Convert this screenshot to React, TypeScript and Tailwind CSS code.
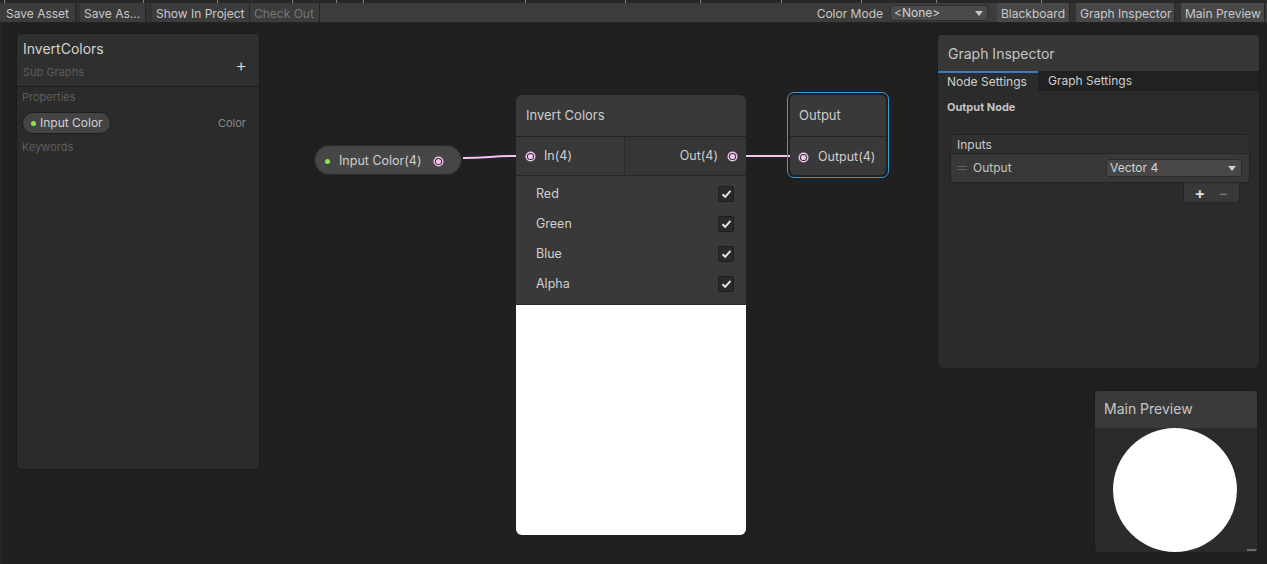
import React from "react";

const PINK = "#efc4ef";

const Port: React.FC = () => (
  <svg width="11" height="11" viewBox="0 0 11 11" className="shrink-0">
    <circle cx="5.5" cy="5.5" r="5" fill={PINK} />
    <circle cx="5.5" cy="5.5" r="3.6" fill="#2e2e2e" />
    <circle cx="5.5" cy="5.5" r="2.6" fill={PINK} />
  </svg>
);

const Check: React.FC = () => (
  <div className="w-[16px] h-[16px] rounded-[2px] bg-[#2a2a2a] border border-[#1e1e1e] flex items-center justify-center">
    <svg width="11" height="10" viewBox="0 0 11 10">
      <path d="M1.5 5.2 L4.2 7.8 L9.5 1.8" stroke="#e4e4e4" strokeWidth="2" fill="none" />
    </svg>
  </div>
);

const ToolButton: React.FC<{ label: string; w: string; dim?: boolean; on?: boolean }> = ({ label, w, dim, on }) => (
  <div
    className={`${w} h-full flex items-center pl-[4px] pt-[2px] text-[12px] border-r border-[#262626] ${
      dim ? "text-[#777]" : "text-[#c8c8c8]"
    } ${on ? "bg-[#484848]" : "bg-[#3c3c3c]"}`}
  >
    {label}
  </div>
);

const Tick: React.FC<{ ml: string }> = ({ ml }) => <div className={`${ml} w-px h-[3px] bg-[#8a8a8a]`} />;

const Toolbar: React.FC = () => (
  <div className="h-[23px] flex flex-col">
    <div className="h-[3px] shrink-0 bg-[#282828] flex items-start overflow-hidden">
      <Tick ml="ml-[4px]" />
      <Tick ml="ml-[138px]" />
      <Tick ml="ml-[73px]" />
      <Tick ml="ml-[74px]" />
      <Tick ml="ml-[43px]" />
      <Tick ml="ml-[26px]" />
      <Tick ml="ml-[161px]" />
      <Tick ml="ml-[99px]" />
      <Tick ml="ml-[74px]" />
      <Tick ml="ml-[80px]" />
      <Tick ml="ml-[79px]" />
      <Tick ml="ml-[74px]" />
      <Tick ml="ml-[104px]" />
    </div>
    <div className="h-[20px] bg-[#3c3c3c] flex items-stretch border-b border-[#232323]">
      <div className="flex ml-[2px] h-full">
        <ToolButton label="Save Asset" w="w-[74px]" />
        <div className="w-[4px] bg-[#333]" />
        <ToolButton label="Save As..." w="w-[66px]" />
        <div className="w-[6px] bg-[#333]" />
        <ToolButton label="Show In Project" w="w-[98px]" />
        <ToolButton label="Check Out" w="w-[70px]" dim />
      </div>
      <div className="flex-1" />
      <div className="flex items-center h-full">
        <span className="text-[12px] text-[#c8c8c8] mr-[7px] pt-[2px]">Color Mode</span>
        <div className="w-[98px] h-[16px] mt-[1px] rounded-[3px] bg-[#4a4a4a] border border-[#2f2f2f] flex items-center justify-between pl-[3px] pr-[4px] text-[12px] text-[#d0d0d0]">
          <span>&lt;None&gt;</span>
          <svg width="8" height="5" viewBox="0 0 8 5">
            <path d="M0 0 H8 L4 5 Z" fill="#c8c8c8" />
          </svg>
        </div>
        <div className="w-[9px]" />
        <div className="flex h-full">
          <ToolButton label="Blackboard" w="w-[73px]" on />
          <div className="w-[6px] bg-[#333]" />
          <ToolButton label="Graph Inspector" w="w-[99px]" on />
          <div className="w-[6px] bg-[#333]" />
          <ToolButton label="Main Preview" w="w-[84px]" on />
        </div>
        <div className="w-[2px]" />
      </div>
    </div>
  </div>
);

const Blackboard: React.FC = () => (
  <div className="ml-[14px] mt-[10px] w-[244px] h-[437px] rounded-[5px] bg-[#2b2b2b] border border-[#1b1b1b] flex flex-col overflow-hidden">
    <div className="h-[53px] bg-[#2f2f2f] border-b border-[#1e1e1e] px-[6px] pt-[6px] relative">
      <div className="text-[14px] text-[#d2d2d2] leading-[18px]">InvertColors</div>
      <div className="text-[11px] text-[#5c5c5c] mt-[7px] leading-[14px]">Sub Graphs</div>
      <div className="absolute right-[12px] top-[23px] text-[#e0e0e0] text-[18px] leading-[18px] font-light">+</div>
    </div>
    <div className="px-[5px] pt-[3px]">
      <div className="text-[11px] text-[#5e5e5e] leading-[14px]">Properties</div>
      <div className="flex items-center justify-between mt-[8px] pr-[8px]">
        <div className="h-[22px] w-[89px] rounded-full bg-[#444] border border-[#1d1d1d] flex items-center pl-[8px] gap-[4px]">
          <span className="w-[5px] h-[5px] rounded-full bg-[#8be54e]" />
          <span className="text-[12px] text-[#d2d2d2]">Input Color</span>
        </div>
        <span className="text-[11px] text-[#8a8a8a]">Color</span>
      </div>
      <div className="text-[11px] text-[#5e5e5e] leading-[14px] mt-[6px]">Keywords</div>
    </div>
  </div>
);

const Inspector: React.FC = () => (
  <div className="w-[323px] h-[335px] rounded-[5px] bg-[#2b2b2b] border border-[#1b1b1b] flex flex-col overflow-hidden">
    <div className="h-[36px] bg-[#373737] flex items-center pl-[10px] text-[14px] text-[#c6c6c6]">Graph Inspector</div>
    <div className="h-[20px] bg-[#212121] flex text-[12px] text-[#cfcfcf]">
      <div className="w-[100px] bg-[#2b2b2b] border-t-2 border-[#3a7ac0] flex items-center pl-[9px]">Node Settings</div>
      <div className="flex items-center pl-[10px]">Graph Settings</div>
    </div>
    <div className="px-[9px] pt-[9px]">
      <div className="text-[11px] font-bold text-[#c4c4c4] leading-[14px]">Output Node</div>
      <div className="mt-[20px] ml-[3px] w-[300px]">
        <div className="h-[20px] bg-[#303030] border border-[#232323] rounded-t-[3px] flex items-center pl-[6px] pt-[1px] text-[12px] text-[#c8c8c8]">Inputs</div>
        <div className="h-[29px] bg-[#383838] border border-t-0 border-[#232323] rounded-b-[3px] flex items-center pl-[6px] pr-[7px]">
          <div className="flex flex-col gap-[2px] w-[10px]">
            <div className="h-px bg-[#5c5c5c]" />
            <div className="h-px bg-[#5c5c5c]" />
          </div>
          <span className="ml-[6px] text-[12px] text-[#c4c4c4]">Output</span>
          <div className="flex-1" />
          <div className="w-[136px] h-[18px] rounded-[3px] bg-[#474747] border border-[#2a2a2a] flex items-center justify-between pl-[3px] pr-[5px] text-[12px] text-[#d4d4d4]">
            <span>Vector 4</span>
            <svg width="8" height="5" viewBox="0 0 8 5">
              <path d="M0 0 H8 L4 5 Z" fill="#cfcfcf" />
            </svg>
          </div>
        </div>
        <div className="flex justify-end pr-[10px]">
          <div className="w-[57px] h-[20px] bg-[#383838] border border-t-0 border-[#232323] rounded-b-[3px] flex items-center justify-around px-[4px]">
            <span className="text-[16px] leading-[16px] text-[#e2e2e2] font-semibold">+</span>
            <span className="text-[16px] leading-[16px] text-[#7a7a7a]">−</span>
          </div>
        </div>
      </div>
    </div>
  </div>
);

const MainPreview: React.FC = () => (
  <div className="mt-[21px] mr-[2px] w-[164px] h-[163px] rounded-[5px] bg-[#2b2b2b] border border-[#1b1b1b] flex flex-col overflow-hidden">
    <div className="h-[37px] shrink-0 bg-[#3a3a3a] flex items-center pl-[9px] pb-[3px] text-[14px] text-[#c6c6c6]">Main Preview</div>
    <div className="flex-1 flex justify-center relative">
      <div className="w-[124px] h-[124px] rounded-full bg-white ml-[-2px]" />
      <div className="absolute right-0 bottom-[1px] w-[10px] h-[2px] bg-[#6a6a6a]" />
    </div>
  </div>
);

const App: React.FC = () => {
  return (
    <div
      className="w-[1267px] h-[564px] bg-[#202020] overflow-hidden flex flex-col"
      style={{ fontFamily: "Inter, 'Noto Sans', sans-serif" }}
    >
      <Toolbar />
      <div className="relative flex-1 flex justify-between border-l-2 border-[#252525]">
        <Blackboard />
        <div className="flex flex-col items-end mr-[7px] mt-[11px]">
          <Inspector />
          <MainPreview />
        </div>

        {/* edges */}
        <svg className="absolute left-0 top-0 pointer-events-none" width="1265" height="541">
          <path d="M461 135 C 488 135, 488 133, 514 133" stroke={PINK} strokeWidth="2" fill="none" />
          <path d="M514 133 H 526" stroke="#6a5a6a" strokeWidth="2" />
          <path d="M736 133 H 788" stroke={PINK} strokeWidth="2" />
          <path d="M788 133 H 798" stroke="#6a5a6a" strokeWidth="2" />
        </svg>

        {/* Input Color(4) property node */}
        <div className="absolute left-[312px] top-[122px] w-[148px] h-[30px] rounded-full bg-[#464646] border border-[#2a2a2a] flex items-center pl-[10px] pr-[17px] pt-[2px]">
          <span className="w-[5px] h-[5px] rounded-full bg-[#8be54e]" />
          <span className="ml-[9px] text-[12.5px] text-[#cfcfcf]">Input Color(4)</span>
          <div className="flex-1" />
          <Port />
        </div>

        {/* Invert Colors node */}
        <div className="absolute left-[514px] top-[72px] w-[230px] h-[440px] rounded-[6px] bg-[#393939] flex flex-col overflow-hidden">
          <div className="h-[42px] shrink-0 border-b border-[#242424] flex items-center pl-[10px] text-[13px] text-[#cdcdcd]">Invert Colors</div>
          <div className="h-[39px] shrink-0 flex border-b border-[#262626]">
            <div className="w-[109px] flex items-center pl-[9px] pt-[1px] border-r border-[#2a2a2a] bg-[#383838]">
              <Port />
              <span className="ml-[8px] text-[12.5px] text-[#cfcfcf]">In(4)</span>
            </div>
            <div className="flex-1 flex items-center justify-end pr-[8px] pt-[1px] bg-[#363636]">
              <span className="mr-[9px] text-[12.5px] text-[#cfcfcf]">Out(4)</span>
              <Port />
            </div>
          </div>
          <div className="h-[129px] shrink-0 flex flex-col pt-[3px] border-b border-[#2a2a2a]">
            {["Red", "Green", "Blue", "Alpha"].map(c => (
              <div key={c} className="h-[30px] flex items-center justify-between pl-[20px] pr-[12px]">
                <span className="text-[12.5px] text-[#cfcfcf]">{c}</span>
                <Check />
              </div>
            ))}
          </div>
          <div className="flex-1 bg-white" />
        </div>

        {/* Output node */}
        <div className="absolute left-[785px] top-[69px] w-[102px] h-[86px] rounded-[7px] border border-[#3a9ad6] p-[2px]">
          <div className="w-full h-full rounded-[5px] bg-[#393939] flex flex-col overflow-hidden">
            <div className="h-[42px] shrink-0 border-b border-[#242424] flex items-center pl-[9px] text-[13px] text-[#cdcdcd]">Output</div>
            <div className="flex-1 flex items-center pl-[8px] pt-[2px]">
              <Port />
              <span className="ml-[9px] text-[12.5px] text-[#cfcfcf]">Output(4)</span>
            </div>
          </div>
        </div>
      </div>
    </div>
  );
};

export default App;
